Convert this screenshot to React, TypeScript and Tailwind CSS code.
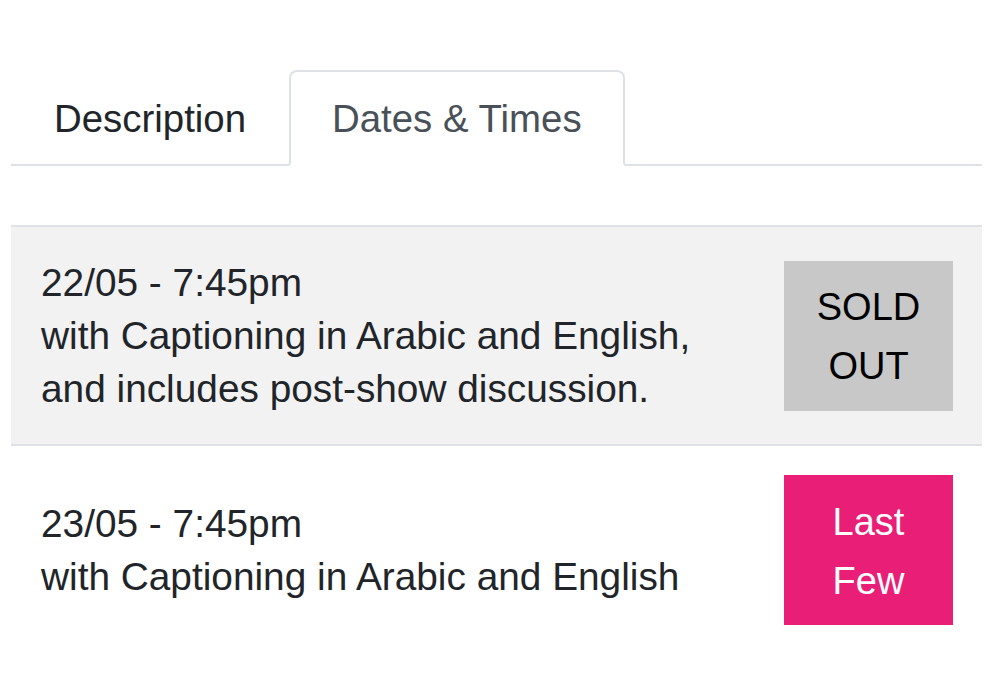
import React, { useState } from 'react';

const dates = [
  {
    when: '22/05 - 7:45pm',
    lines: ['with Captioning in Arabic and English,', 'and includes post-show discussion.'],
    status: ['SOLD', 'OUT'],
    soldOut: true,
  },
  {
    when: '23/05 - 7:45pm',
    lines: ['with Captioning in Arabic and English'],
    status: ['Last', 'Few'],
    soldOut: false,
  },
];

const App = () => {
  const [tab, setTab] = useState<'description' | 'dates'>('dates');

  return (
    <div className="min-h-screen bg-white pl-[11px] pr-[18px] pt-[70px] text-[#212529] [font-family:'Liberation_Sans',Arial,sans-serif]">
      <div className="flex border-b-2 border-[#dee2e6]">
        <button
          className={`-mb-[2px] px-[41px] pt-[2px] h-[96px] text-[38.4px] rounded-t-[8px] border-2 ${tab === 'description' ? 'border-[#dee2e6] border-b-white bg-white text-[#495057]' : 'border-transparent text-[#212529]'}`}
          onClick={() => setTab('description')}
        >
          Description
        </button>
        <button
          className={`-mb-[2px] px-[41px] pt-[2px] h-[96px] text-[38.4px] rounded-t-[8px] border-2 ${tab === 'dates' ? 'border-[#dee2e6] border-b-white bg-white text-[#495057]' : 'border-transparent text-[#212529]'}`}
          onClick={() => setTab('dates')}
        >
          Dates &amp; Times
        </button>
      </div>

      <div className="mt-[59px]">
        {dates.map((d, i) => (
          <div
            key={i}
            className={`flex items-center justify-between border-t-2 border-[#dee2e6] pl-[30px] pr-[29px] py-[29px] ${i === 0 ? 'bg-[#f2f2f2]' : 'bg-white'}`}
          >
            <div className="text-[38.8px] leading-[53px]">
              <div>{d.when}</div>
              {d.lines.map((l, j) => (
                <div key={j}>{l}</div>
              ))}
            </div>
            <div
              className={`w-[169px] h-[150px] pt-[3px] flex flex-col items-center justify-center text-[38px] leading-[59px] ${d.soldOut ? 'bg-[#c8c8c8] text-black' : 'bg-[#e91e77] text-white'}`}
            >
              {d.status.map((s, j) => (
                <div key={j}>{s}</div>
              ))}
            </div>
          </div>
        ))}
      </div>
    </div>
  );
};

export default App;
